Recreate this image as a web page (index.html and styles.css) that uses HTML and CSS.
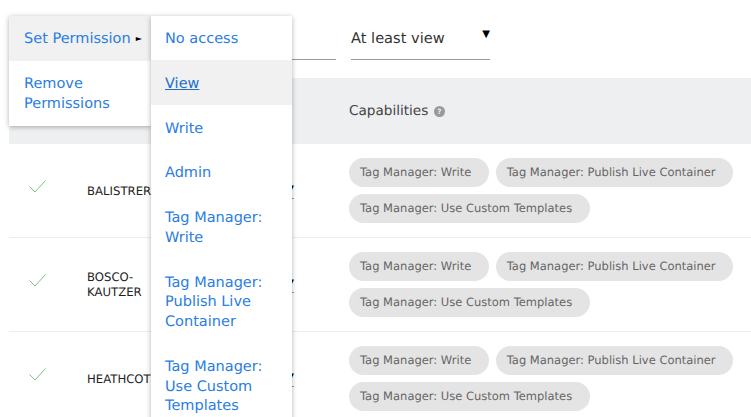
FILE: index.html
```html
<!DOCTYPE html>
<html lang="en">
<head>
<meta charset="utf-8">
<title>Permissions</title>
<link rel="stylesheet" href="styles.css">
</head>
<body>
<div class="page">
  <div class="filters">
    <div class="field field-search"></div>
    <div class="field field-level"><span>At least view</span><span class="caret">▼</span></div>
  </div>
  <div class="table">
    <div class="thead">
      <div class="head-cap">Capabilities <svg class="help" width="11" height="11" viewBox="0 0 12 12"><circle cx="6" cy="6" r="6" fill="#999"/><text x="6" y="9" text-anchor="middle" class="help-mark">?</text></svg></div>
    </div>
    <div class="row">
      <svg class="check" width="17" height="13" viewBox="0 0 17 13"><path d="M0.5 6.5 L6 12 L16.5 0.5" fill="none" stroke="#7dbf84" stroke-width="1"/></svg>
      <div class="name">BALISTRERI</div>
      <div class="select"><span class="mini">▼</span></div>
      <div class="pills"><span class="pill">Tag Manager: Write</span><span class="pill">Tag Manager: Publish Live Container</span><span class="pill">Tag Manager: Use Custom Templates</span></div>
    </div>
    <div class="row">
      <svg class="check" width="17" height="13" viewBox="0 0 17 13"><path d="M0.5 6.5 L6 12 L16.5 0.5" fill="none" stroke="#7dbf84" stroke-width="1"/></svg>
      <div class="name">BOSCO-<br>KAUTZER</div>
      <div class="select"><span class="mini">▼</span></div>
      <div class="pills"><span class="pill">Tag Manager: Write</span><span class="pill">Tag Manager: Publish Live Container</span><span class="pill">Tag Manager: Use Custom Templates</span></div>
    </div>
    <div class="row">
      <svg class="check" width="17" height="13" viewBox="0 0 17 13"><path d="M0.5 6.5 L6 12 L16.5 0.5" fill="none" stroke="#7dbf84" stroke-width="1"/></svg>
      <div class="name">HEATHCOTE</div>
      <div class="select"><span class="mini">▼</span></div>
      <div class="pills"><span class="pill">Tag Manager: Write</span><span class="pill">Tag Manager: Publish Live Container</span><span class="pill">Tag Manager: Use Custom Templates</span></div>
    </div>
  </div>
  <div class="menu menu-main">
    <a class="item item-active item-nowrap">Set Permission<span class="arrow">►</span></a>
    <a class="item">Remove Permissions</a>
  </div>
  <div class="menu menu-sub">
    <a class="item">No access</a>
    <a class="item item-active item-hover">View</a>
    <a class="item">Write</a>
    <a class="item">Admin</a>
    <a class="item">Tag Manager: Write</a>
    <a class="item">Tag Manager: Publish Live Container</a>
    <a class="item">Tag Manager: Use Custom Templates</a>
  </div>
</div>
</body>
</html>
```
FILE: styles.css
```css
* { box-sizing: border-box; }
html, body { margin: 0; padding: 0; background: #fff; }
body { font-family: "DejaVu Sans", sans-serif; color: #333; text-rendering: geometricPrecision; }
.page { position: relative; width: 751px; height: 417px; overflow: hidden; }

.filters { display: flex; height: 78px; padding-left: 140px; gap: 15px; }
.field { height: 60px; border-bottom: 1px solid #999; }
.field-search { width: 196px; }
.field-level { width: 139px; display: flex; justify-content: space-between; padding-top: 30px; font-size: 14.6px; line-height: 18px; color: #333; }
.caret { font-size: 10px; color: #000; line-height: 10px; }

.table { margin-left: 9px; }
.thead { height: 66px; background: #eeeff0; display: flex; align-items: center; padding-left: 340px; }
.head-cap { font-size: 13.6px; color: #444; display: flex; align-items: center; gap: 6px; }
.help { display: block; }
.help-mark { font-size: 8px; font-weight: bold; fill: #eee; font-family: "DejaVu Sans", sans-serif; }

.row { height: 94px; display: flex; align-items: center; border-bottom: 1px solid #eee; padding-left: 20px; position: relative; }
.check { flex: none; margin-top: -9px; }
.name { width: 180px; margin-left: 41px; font-size: 11.7px; line-height: 15px; color: #222; flex: none; padding-top: 1px; }
.select { position: absolute; left: 240px; top: 38px; width: 45px; height: 17px; border-bottom: 1px solid #999; text-align: right; line-height: 10px; }
.mini { font-size: 10px; color: #000; }
.pills { position: absolute; left: 340px; top: 14px; display: flex; flex-wrap: wrap; gap: 7px; width: 402px; }
.pill { height: 29px; line-height: 28px; padding: 0 17.5px 0 11px; border-radius: 15px; background: #e4e4e4; color: #666; font-size: 11.5px; white-space: nowrap; }

.menu { position: absolute; top: 15.5px; background: #fff; box-shadow: 0 1px 5px rgba(0,0,0,.3); }
.menu-main { left: 9px; width: 142px; }
.menu-sub { left: 151px; width: 141px; }
.menu-sub .item { padding: 14.3px 14px 11px; }
.item { display: block; padding: 13.8px 15px 11.5px; font-size: 14.5px; line-height: 19.6px; color: #2a7de1; }
.item-nowrap { white-space: nowrap; }
.item-active { background: #f1f1f1; }
.item-hover { text-decoration: underline; color: #1e6fcc; }
.arrow { font-size: 8px; color: #000; margin-left: 5px; vertical-align: 2px; }
```
